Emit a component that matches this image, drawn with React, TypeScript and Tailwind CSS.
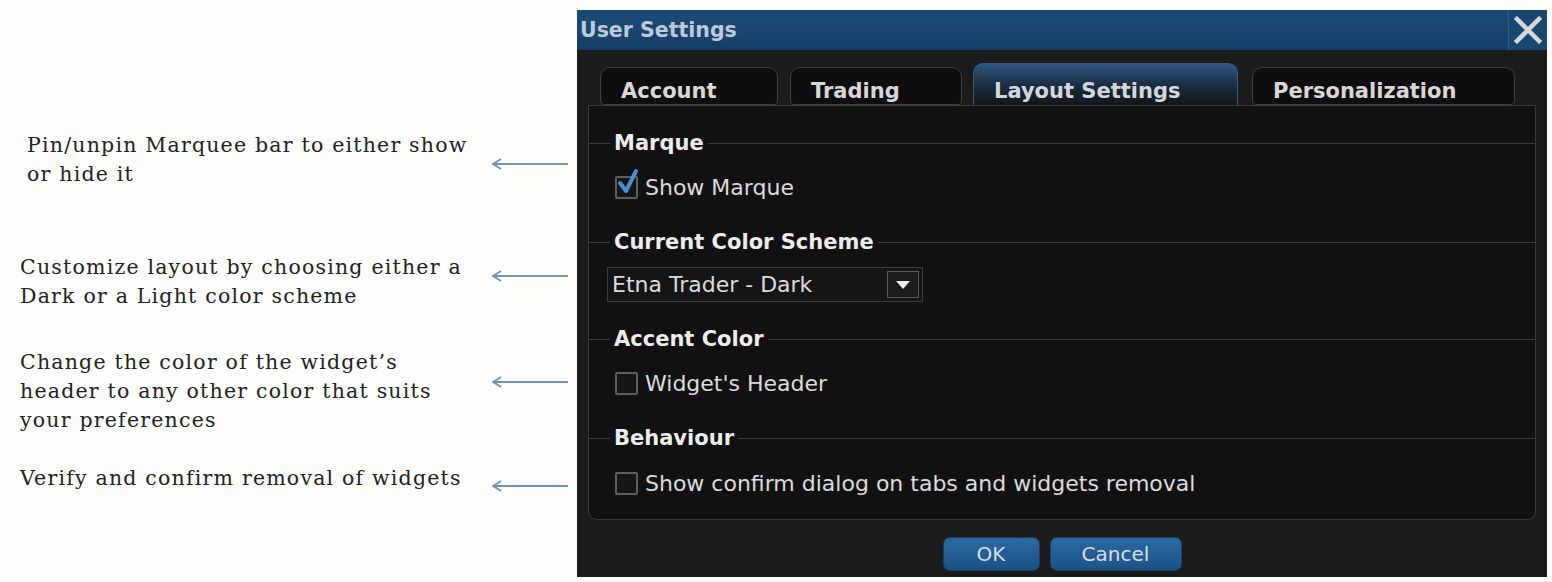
import React from 'react';

const serif = { fontFamily: '"DejaVu Serif", "Liberation Serif", serif' };

/** Thin blue arrow pointing left, towards the dialog. */
function Arrow() {
  return (
    <svg width="80" height="14" viewBox="0 0 80 14" className="shrink-0">
      <path d="M78 7 H4" stroke="#7193c0" strokeWidth="2" fill="none" />
      <path d="M11 2 L3 7 L11 12" stroke="#7193c0" strokeWidth="2" fill="none" strokeLinejoin="round" />
    </svg>
  );
}

function Note({ lines, mt, arrowMt, pl = 'pl-[20px]' }: { lines: string[]; mt: string; arrowMt: string; pl?: string }) {
  return (
    <div className={`flex items-start ${mt}`}>
      <div className={`w-[490px] ${pl} text-[20.5px] leading-[29px] tracking-[1.2px] text-[#222]`} style={serif}>
        {lines.map((l) => (
          <div key={l} className="whitespace-nowrap">
            {l}
          </div>
        ))}
      </div>
      <div className={arrowMt}>
        <Arrow />
      </div>
    </div>
  );
}

function Legend({ children }: { children: React.ReactNode }) {
  return (
    <div className="flex h-6 items-center">
      <div className="h-px w-[21px] bg-[#3c3c3c]" />
      <div className="px-[4px] text-[21px] font-bold leading-6 text-[#ececec]">{children}</div>
      <div className="h-px flex-1 bg-[#3c3c3c]" />
    </div>
  );
}

function Check({ checked, label, mt }: { checked?: boolean; label: string; mt: string }) {
  return (
    <div className={`flex h-[26px] items-center gap-[7px] pl-[26px] ${mt}`}>
      <span className="relative h-[23px] w-[23px] shrink-0 rounded-[2px] border-2 border-[#5e5e5e] bg-[#161616]">
        {checked && (
          <svg width="24" height="28" viewBox="0 0 24 28" className="absolute -top-[10px] -left-[1px]">
            <path d="M4 15 L10 23 L20 3" stroke="#4a8fd0" strokeWidth="4" fill="none" strokeLinecap="round" strokeLinejoin="round" />
          </svg>
        )}
      </span>
      <span className="text-[22px] text-[#dcdcdc]">{label}</span>
    </div>
  );
}

function Tab({ label, w, active }: { label: string; w: string; active?: boolean }) {
  return active ? (
    <div className={`${w} h-[42px] rounded-t-[10px] border border-b-0 border-[#3d5a78] bg-gradient-to-b from-[#2f5880] via-[#1a2f44] to-[#111518] pl-[20px] pt-[15px] text-[21px] font-bold leading-6 text-[#d4d8dc]`}>
      {label}
    </div>
  ) : (
    <div className={`${w} h-[38px] rounded-t-[10px] rounded-b-[4px] border border-[#3e3e3e] bg-[#0e0e0e] pl-[20px] pt-[11px] text-[21px] font-bold leading-6 text-[#d8d8d8]`}>
      {label}
    </div>
  );
}

function Button({ label, w }: { label: string; w: string }) {
  return (
    <div className={`${w} flex h-[34px] items-center justify-center rounded-[7px] border border-[#1a3f63] bg-gradient-to-b from-[#2a6aa3] to-[#1b5286] text-[20px] text-[#d6dee6]`}>
      {label}
    </div>
  );
}

export default function App() {
  return (
    <div className="flex h-[582px] w-[1552px] overflow-hidden bg-[#fdfdfb]">
      <div className="w-[577px] shrink-0 pt-[131px]">
        <Note mt="mt-0" arrowMt="mt-[26px]" pl="pl-[27px]" lines={['Pin/unpin Marquee bar to either show', 'or hide it']} />
        <Note mt="mt-[64px]" arrowMt="mt-[16px]" lines={['Customize layout by choosing either a', 'Dark or a Light color scheme']} />
        <Note
          mt="mt-[37px]"
          arrowMt="mt-[27px]"
          lines={['Change the color of the widget\u2019s', 'header to any other color that suits', 'your preferences']}
        />
        <Note mt="mt-[29px]" arrowMt="mt-[15px]" lines={['Verify and confirm removal of widgets']} />
      </div>

      <div
        className="mt-[10px] flex h-[567px] w-[970px] shrink-0 flex-col bg-[#1b1b1b]"
        style={{ fontFamily: '"DejaVu Sans", "Noto Sans", sans-serif' }}
      >
        <div className="flex h-[40px] items-center bg-gradient-to-b from-[#1d4b78] to-[#153e66]">
          <div className="flex-1 pl-[3px] text-[20.5px] font-bold text-[#bccadb]">User Settings</div>
          <div className="flex h-full w-[39px] items-center justify-center border-l border-[#2f5a84] bg-[#1a4670]">
            <svg width="30" height="28" viewBox="0 0 30 28">
              <path d="M4 3 L26 25 M26 3 L4 25" stroke="#d2d8de" strokeWidth="4.5" strokeLinecap="square" />
            </svg>
          </div>
        </div>

        <div className="flex flex-1 flex-col px-[11px]">
          <div className="flex h-[55px] items-end pl-[12px]">
            <Tab label="Account" w="w-[178px]" />
            <div className="w-[12px]" />
            <Tab label="Trading" w="w-[172px]" />
            <div className="w-[11px]" />
            <Tab label="Layout Settings" w="w-[265px]" active />
            <div className="w-[14px]" />
            <Tab label="Personalization" w="w-[263px]" />
          </div>

          <div className="h-[415px] rounded-b-[8px] border border-[#3a3a3a] bg-[#111111] pt-[25px]">
            <Legend>Marque</Legend>
            <Check checked label="Show Marque" mt="mt-[19px]" />

            <div className="mt-[30px]">
              <Legend>Current Color Scheme</Legend>
            </div>
            <div className="ml-[18px] mt-[13px] flex h-[35px] w-[316px] items-center justify-between border border-[#3d3d3d] bg-[#151515] pl-[4px] pr-[3px]">
              <span className="text-[22px] text-[#dcdcdc]">Etna Trader - Dark</span>
              <span className="flex h-[27px] w-[32px] items-center justify-center border border-[#5a5a5a] bg-[#1c1c1c]">
                <svg width="14" height="8" viewBox="0 0 14 8">
                  <path d="M0 0 H14 L7 8 Z" fill="#eeeeee" />
                </svg>
              </span>
            </div>

            <div className="mt-[25px]">
              <Legend>Accent Color</Legend>
            </div>
            <Check label="Widget's Header" mt="mt-[19px]" />

            <div className="mt-[30px]">
              <Legend>Behaviour</Legend>
            </div>
            <Check label="Show confirm dialog on tabs and widgets removal" mt="mt-[20px]" />
          </div>

          <div className="flex justify-center gap-[10px] pt-[17px]">
            <Button label="OK" w="w-[97px]" />
            <Button label="Cancel" w="w-[132px]" />
          </div>
        </div>
      </div>
    </div>
  );
}
